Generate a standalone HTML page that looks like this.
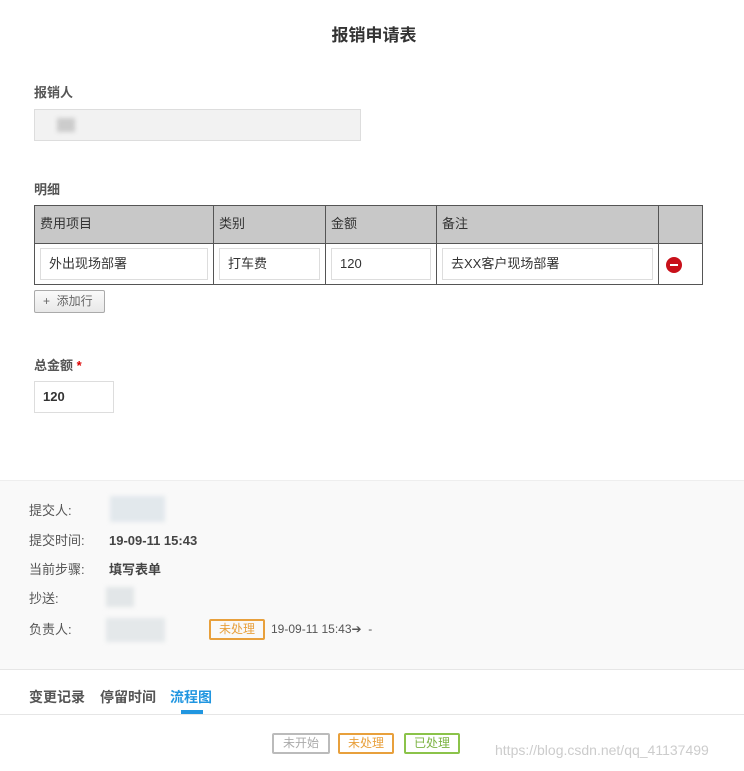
<!DOCTYPE html>
<html><head><meta charset="utf-8"><style>
*{box-sizing:border-box;margin:0;padding:0}
body{width:744px;height:771px;background:#fff;font-family:"Liberation Sans","Noto Sans CJK SC",sans-serif;font-size:13px;line-height:18px;color:#333;position:relative;overflow:hidden}
.a{position:absolute}
.lbl{font-weight:bold;color:#555;font-size:13px}
.inp{position:absolute;border:1px solid #ddd;background:#fff;height:32px;line-height:30px;padding-left:8px;font-size:13px;color:#333}
.blur{position:absolute;background:#ddd;filter:blur(2px)}
.tag{position:absolute;border:2px solid;border-radius:2px;font-size:12px;text-align:center;line-height:17px;height:21px}
</style></head><body>
<div class="a" style="left:2px;top:26px;width:744px;text-align:center;font-size:17px;line-height:20px;font-weight:bold;color:#333">报销申请表</div>
<div class="a lbl" style="left:34px;top:84px">报销人</div>
<div class="a" style="left:34px;top:109px;width:327px;height:32px;background:#f2f2f2;border:1px solid #ddd"></div>
<div class="blur" style="left:57px;top:118px;width:18px;height:14px;background:#ccc"></div>
<div class="a lbl" style="left:34px;top:181px">明细</div>
<div class="a" style="left:34px;top:205px;width:669px;height:39px;background:#c8c8c8;border:1px solid #555"></div>
<div class="a" style="left:34px;top:243px;width:669px;height:42px;border:1px solid #555;border-top:none"></div>
<div class="a" style="left:213px;top:205px;width:1px;height:80px;background:#555"></div>
<div class="a" style="left:325px;top:205px;width:1px;height:80px;background:#555"></div>
<div class="a" style="left:436px;top:205px;width:1px;height:80px;background:#555"></div>
<div class="a" style="left:658px;top:205px;width:1px;height:80px;background:#555"></div>
<div class="a" style="left:40px;top:215px">费用项目</div>
<div class="a" style="left:219px;top:215px">类别</div>
<div class="a" style="left:331px;top:215px">金额</div>
<div class="a" style="left:442px;top:215px">备注</div>
<div class="inp" style="left:40px;top:248px;width:168px">外出现场部署</div>
<div class="inp" style="left:219px;top:248px;width:101px">打车费</div>
<div class="inp" style="left:331px;top:248px;width:100px">120</div>
<div class="inp" style="left:442px;top:248px;width:211px">去XX客户现场部署</div>
<div class="a" style="left:666px;top:257px;width:16px;height:16px;border-radius:50%;background:#c8101a"><div style="position:absolute;left:4px;top:7px;width:8px;height:2px;background:#fff"></div></div>
<div class="a" style="left:34px;top:290px;width:71px;height:23px;border:1px solid #aaa;border-radius:2px;background:linear-gradient(#fafafa,#e8e8e8);color:#666;font-size:12px;line-height:21px;padding-left:8px">+&nbsp; 添加行</div>
<div class="a lbl" style="left:34px;top:357px">总金额 <span style="color:#d00">*</span></div>
<div class="inp" style="left:34px;top:381px;width:80px;font-weight:bold">120</div>
<div class="a" style="left:0;top:480px;width:744px;height:190px;background:#f9f9f9;border-top:1px solid #eee;border-bottom:1px solid #e6e6e6"></div>
<div class="a" style="left:29px;top:502px;color:#555">提交人:</div>
<div class="blur" style="left:110px;top:496px;width:55px;height:26px;background:#e2e8ec"></div>
<div class="a" style="left:29px;top:532px;color:#555">提交时间:</div>
<div class="a" style="left:109px;top:532px;font-weight:bold;color:#444">19-09-11 15:43</div>
<div class="a" style="left:29px;top:561px;color:#555">当前步骤:</div>
<div class="a" style="left:109px;top:561px;font-weight:bold;color:#444">填写表单</div>
<div class="a" style="left:29px;top:590px;color:#555">抄送:</div>
<div class="blur" style="left:106px;top:587px;width:28px;height:20px;background:#e2e6e8"></div>
<div class="a" style="left:29px;top:621px;color:#555">负责人:</div>
<div class="blur" style="left:106px;top:618px;width:59px;height:24px;background:#e4e8ea"></div>
<div class="tag" style="left:209px;top:619px;width:56px;border-color:#e8a03c;color:#e8a03c">未处理</div>
<div class="a" style="left:271px;top:620px;font-size:12px;color:#555">19-09-11 15:43➔ &nbsp;-</div>
<div class="a" style="left:29px;top:688px;font-weight:bold;color:#555;font-size:14px">变更记录</div>
<div class="a" style="left:100px;top:688px;font-weight:bold;color:#555;font-size:14px">停留时间</div>
<div class="a" style="left:170px;top:688px;font-weight:bold;color:#2196e0;font-size:14px">流程图</div>
<div class="a" style="left:181px;top:710px;width:22px;height:4px;background:#2196e0"></div>
<div class="a" style="left:0;top:714px;width:744px;height:1px;background:#e6e6e6"></div>
<div class="tag" style="left:272px;top:733px;width:58px;border-color:#bbb;color:#aaa">未开始</div>
<div class="tag" style="left:338px;top:733px;width:56px;border-color:#e8a03c;color:#e8a03c">未处理</div>
<div class="tag" style="left:404px;top:733px;width:56px;border-color:#8bc34a;color:#7cb342">已处理</div>
<div class="a" style="left:495px;top:741px;font-size:14px;color:#ccc">https://blog.csdn.net/qq_41137499</div>
</body></html>
